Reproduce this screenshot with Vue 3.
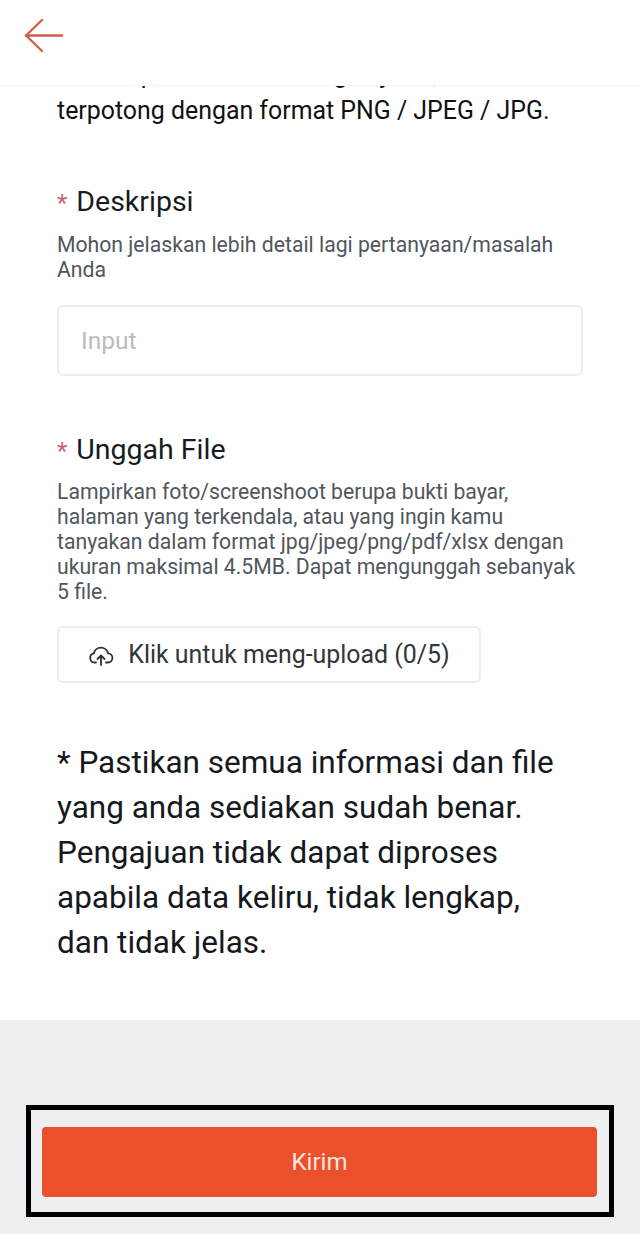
<script setup>
const uploadText = 'Lampirkan foto/screenshoot berupa bukti bayar, halaman yang terkendala, atau yang ingin kamu tanyakan dalam format jpg/jpeg/png/pdf/xlsx dengan ukuran maksimal 4.5MB. Dapat mengunggah sebanyak 5 file.'
</script>

<template>
  <div class="page">
    <header class="topbar">
      <svg class="back" width="40" height="34" viewBox="0 0 40 34" fill="none" stroke="#d0604a" stroke-width="2.4" stroke-linecap="round" stroke-linejoin="round">
        <path d="M38 16.500H2"/>
        <path d="M18 1L2 16.500L18 32"/>
      </svg>
    </header>
    <main class="scroll">
      <form class="form" @submit.prevent>
        <p class="intro">Mohon pastikan foto dengan jelas, tidak<br>terpotong dengan format PNG / JPEG / JPG.</p>
        <section class="field desc">
          <h2 class="label"><span class="star">*</span>Deskripsi</h2>
          <p class="hint">Mohon jelaskan lebih detail lagi pertanyaan/masalah Anda</p>
          <div class="input">Input</div>
        </section>
        <section class="field upload">
          <h2 class="label"><span class="star">*</span>Unggah File</h2>
          <p class="hint upload-hint">{{ uploadText }}</p>
          <button type="button" class="upload-btn">
            <svg width="26" height="26" viewBox="0 0 26 26" fill="none" stroke="#2b3136" stroke-width="1.800" stroke-linecap="round" stroke-linejoin="round">
              <path d="M8 20.500H6.500a4.600 4.600 0 0 1-.6-9.100 7.200 7.200 0 0 1 14.100-.1 4.600 4.600 0 0 1-.3 9.200H18"/>
              <path d="M13 23V13.500M9.500 17L13 13.500l3.500 3.500"/>
            </svg>
            <span>Klik untuk meng-upload (0/5)</span>
          </button>
        </section>
        <p class="notice">* Pastikan semua informasi dan file<br>yang anda sediakan sudah benar.<br>Pengajuan tidak dapat diproses<br>apabila data keliru, tidak lengkap,<br>dan tidak jelas.</p>
      </form>
    </main>
    <footer class="footer">
      <div class="frame">
        <button type="button" class="submit">Kirim</button>
      </div>
    </footer>
  </div>
</template>

<style scoped>
.page {
  width: 640px;
  height: 1234px;
  display: flex;
  flex-direction: column;
  overflow: hidden;
  background: #eeeff1;
  font-family: Roboto, "Liberation Sans", sans-serif;
  color: #1c2127;
}
.topbar {
  flex: 0 0 86px;
  background: #fff;
  border-bottom: 1px solid #f3f3f4;
  box-sizing: border-box;
  padding: 19px 0 0 24px;
}
.back { display: block; }
.scroll {
  flex: 0 0 934px;
  background: #fff;
  overflow: hidden;
}
.form {
  margin-top: -29px;
  padding: 0 57px;
}
.intro {
  margin: 0;
  font-size: 24.900px;
  line-height: 36px;
  color: #111;
  white-space: nowrap;
}
.field { display: flex; flex-direction: column; }
.desc { margin-top: 55px; }
.upload { margin-top: 56px; }
.label {
  margin: 0;
  font-size: 28.500px;
  line-height: 36px;
  font-weight: 400;
  color: #161b22;
}
.star {
  color: #c95f6c;
  font-size: 24px;
  margin-right: 9px;
}
.hint {
  margin: 11px 0 0;
  font-size: 21.200px;
  line-height: 25px;
  color: #50565d;
}
.upload-hint { margin-top: 10px; }
.input {
  margin-top: 23px;
  box-sizing: border-box;
  width: 526px;
  height: 71px;
  border: 2px solid #eceded;
  border-radius: 6px;
  padding-left: 22px;
  display: flex;
  align-items: center;
  font-size: 24.500px;
  color: #b9bcc0;
}
.upload-btn {
  margin-top: 22px;
  box-sizing: border-box;
  width: 424px;
  height: 57px;
  border: 2px solid #eceded;
  border-radius: 6px;
  background: #fff;
  display: flex;
  align-items: center;
  justify-content: center;
  gap: 14px;
  font: inherit;
  font-size: 24.900px;
  color: #30363c;
  padding: 0;
}
.notice {
  margin: 57px 0 0;
  font-size: 31.500px;
  line-height: 45px;
  color: #15191e;
  white-space: nowrap;
}
.footer {
  flex: 1;
  padding: 85px 26px 0;
}
.frame {
  box-sizing: border-box;
  width: 588px;
  height: 112px;
  border: 5px solid #000;
  padding: 17px 12px 15px 11px;
}
.submit {
  display: block;
  width: 100%;
  height: 70px;
  border: 0;
  border-radius: 4px;
  background: #ea502c;
  color: #fde7dc;
  font: inherit;
  font-size: 24px;
}
</style>
